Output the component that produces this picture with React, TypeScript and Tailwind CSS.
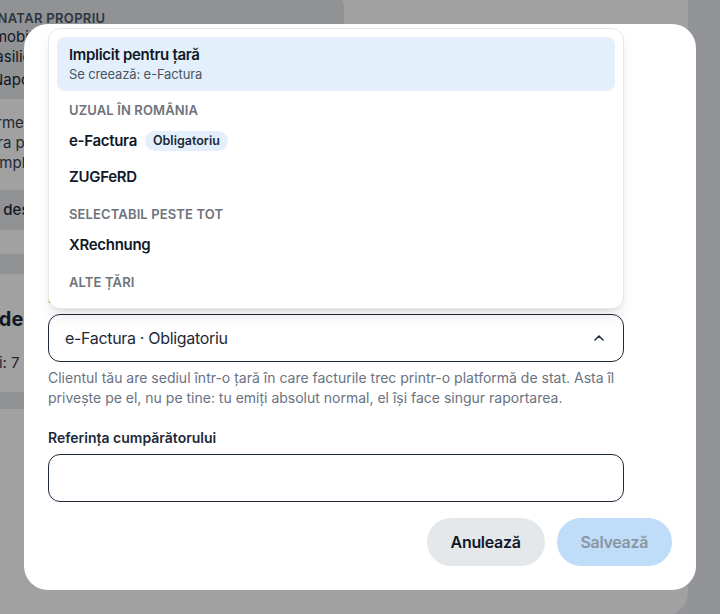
import React from 'react';
import { ChevronUp } from 'lucide-react';

type Option = { label: string; badge?: string };
type Group = { title: string; options: Option[] };

const groups: Group[] = [
  { title: 'Uzual în România', options: [{ label: 'e-Factura', badge: 'Obligatoriu' }, { label: 'ZUGFeRD' }] },
  { title: 'Selectabil peste tot', options: [{ label: 'XRechnung' }] },
  { title: 'Alte țări', options: [] },
];

// Page underneath the dialog
const ClientPage = () => {
  return (
    <div className="-ml-[74px] -mt-6 flex h-[640px] w-[762px] flex-col rounded-3xl bg-white p-4 text-[15px] text-gray-800">
      <div className="w-[402px] rounded-2xl bg-[#e4e7eb] px-4 pt-[17px] pb-[9px]">
        <div className="text-[13px] font-semibold uppercase leading-[18px] tracking-wide text-gray-600">Destinatar propriu</div>
        <div className="leading-5">Alfa Imobiliare SRL</div>
        <div className="leading-5">Str. Vasilicii 12</div>
        <div className="mt-[3px] leading-5">Cluj-Napoca, România</div>
      </div>
      <div className="mt-[14px] px-4 leading-5 text-gray-700">
        <p>Confirmează datele firmei înainte de emitere.</p>
        <p>Factura primește automat seria și numărul.</p>
        <p>Mai simplu, nimic de completat.</p>
      </div>
      <div className="mt-[17px] flex h-10 items-center rounded-xl bg-[#e4e7eb] px-4 font-medium">Alege destinatarul</div>
      <div className="mt-6 h-5 bg-[#e4e7eb]" />
      <h2 className="mt-[31px] px-4 text-xl font-bold leading-7">Zile de plată</h2>
      <p className="mt-5 px-4 leading-5 text-gray-700">Cheiei: 7 zile</p>
      <div className="mt-[19px] h-[17px] bg-[#e4e7eb]" />
    </div>
  );
};

const FormatMenu = () => {
  return (
    <div className="absolute bottom-full left-0 mb-[5px] h-[281px] w-full overflow-hidden rounded-xl border border-[#e5e7eb] bg-white p-2 shadow-lg">
      <div className="rounded-lg bg-[#e3effb] px-3 py-2">
        <div className="text-[15px] font-semibold leading-5 tracking-[-0.02em] text-gray-900">Implicit pentru țară</div>
        <div className="text-[13px] leading-[18px] tracking-[-0.01em] text-gray-600">Se creează: e-Factura</div>
      </div>
      {groups.map(group => (
        <div key={group.title}>
          <div className="px-3 pt-[10px] pb-1 text-[13px] font-semibold uppercase leading-[18px] tracking-[0.01em] text-[#6e737a]">
            {group.title}
          </div>
          {group.options.map(option => (
            <div key={option.label} className="flex h-9 items-center gap-2 px-3 text-[15px] font-semibold tracking-[-0.02em] text-gray-900">
              {option.label}
              {option.badge && (
                <span className="rounded-full bg-[#e3effb] px-2 text-[12.5px] leading-5 font-semibold tracking-normal text-gray-800">{option.badge}</span>
              )}
            </div>
          ))}
        </div>
      ))}
    </div>
  );
};

const EInvoiceDialog = () => {
  return (
    <div className="w-[672px] rounded-3xl bg-white p-6">
      <div className="flex h-[266px] flex-col justify-end pb-1.5">
        <h2 className="text-xl font-bold leading-7 text-gray-900">Factură electronică</h2>
        <p className="mt-2 text-sm leading-5 text-gray-500">Alege formatul în care se trimite factura către client.</p>
        <div className="mt-auto text-sm font-semibold leading-5 text-gray-800">Format</div>
      </div>
      <div className="relative max-w-[576px]">
        <FormatMenu />
        <button className="flex h-12 w-full items-center justify-between rounded-xl border border-gray-800 bg-white px-4 text-base tracking-[-0.02em] text-gray-800">
          <span>e-Factura · Obligatoriu</span>
          <ChevronUp size={16} strokeWidth={2.2} className="text-gray-800" />
        </button>
      </div>
      <p className="mt-1.5 max-w-[576px] text-sm leading-5 text-gray-500">
        Clientul tău are sediul într-o țară în care facturile trec printr-o platformă de stat. Asta îl privește pe el, nu pe tine: tu emiți absolut normal, el își face singur raportarea.
      </p>
      <label className="mt-5 block text-sm font-semibold leading-5 text-gray-800">Referința cumpărătorului</label>
      <input className="mt-1.5 block h-12 w-full max-w-[576px] rounded-xl border border-gray-800 bg-white px-4 text-base outline-none" />
      <div className="mt-4 flex justify-end gap-3">
        <button className="h-12 rounded-full bg-[#e5e8eb] px-6 text-base font-semibold tracking-[-0.02em] text-gray-900">Anulează</button>
        <button disabled className="h-12 rounded-full bg-[#bfdcf8] px-6 text-base font-semibold tracking-[-0.02em] text-[#8b95a1]">Salvează</button>
      </div>
    </div>
  );
};

export default function App() {
  return (
    <div className="relative h-[614px] overflow-hidden bg-[#e7ebf0] font-['Inter',sans-serif]">
      <ClientPage />
      <div className="absolute inset-0 flex items-center justify-center bg-black/[0.37]">
        <EInvoiceDialog />
      </div>
    </div>
  );
}
